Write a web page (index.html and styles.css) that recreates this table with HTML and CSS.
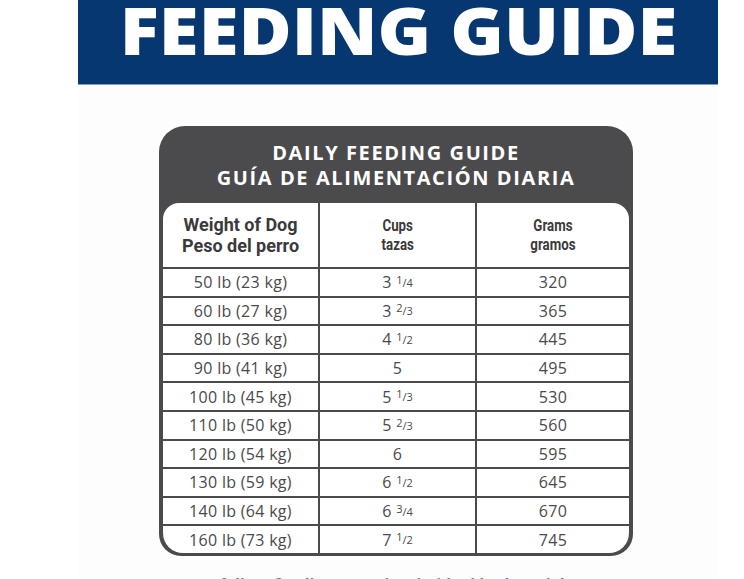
FILE: index.html
```html
<!DOCTYPE html>
<html lang="en">
<head>
<meta charset="utf-8">
<title>Feeding Guide</title>
<link rel="stylesheet" href="styles.css">
</head>
<body>
<div class="page">
  <header class="banner"><h1>FEEDING GUIDE</h1></header>
  <main class="content">
    <section class="card">
      <div class="card-title">
        <div>DAILY FEEDING GUIDE</div>
        <div>GUÍA DE ALIMENTACIÓN DIARIA</div>
      </div>
      <div class="table">
        <div class="cell th th-weight">Weight of Dog<br>Peso del perro</div>
        <div class="cell th th-small"><span class="cond">Cups<br>tazas</span></div>
        <div class="cell th th-small"><span class="cond">Grams<br>gramos</span></div>

        <div class="cell">50 lb (23 kg)</div><div class="cell">3&nbsp;<span class="frac"><span class="num">1</span>/<span class="den">4</span></span></div><div class="cell">320</div>
        <div class="cell">60 lb (27 kg)</div><div class="cell">3&nbsp;<span class="frac"><span class="num">2</span>/<span class="den">3</span></span></div><div class="cell">365</div>
        <div class="cell">80 lb (36 kg)</div><div class="cell">4&nbsp;<span class="frac"><span class="num">1</span>/<span class="den">2</span></span></div><div class="cell">445</div>
        <div class="cell">90 lb (41 kg)</div><div class="cell">5</div><div class="cell">495</div>
        <div class="cell">100 lb (45 kg)</div><div class="cell">5&nbsp;<span class="frac"><span class="num">1</span>/<span class="den">3</span></span></div><div class="cell">530</div>
        <div class="cell">110 lb (50 kg)</div><div class="cell">5&nbsp;<span class="frac"><span class="num">2</span>/<span class="den">3</span></span></div><div class="cell">560</div>
        <div class="cell">120 lb (54 kg)</div><div class="cell">6</div><div class="cell">595</div>
        <div class="cell">130 lb (59 kg)</div><div class="cell">6&nbsp;<span class="frac"><span class="num">1</span>/<span class="den">2</span></span></div><div class="cell">645</div>
        <div class="cell">140 lb (64 kg)</div><div class="cell">6&nbsp;<span class="frac"><span class="num">3</span>/<span class="den">4</span></span></div><div class="cell">670</div>
        <div class="cell">160 lb (73 kg)</div><div class="cell">7&nbsp;<span class="frac"><span class="num">1</span>/<span class="den">2</span></span></div><div class="cell">745</div>
      </div>
    </section>
    <p class="note">Adjust feeding to maintain ideal body weight</p>
  </main>
</div>
</body>
</html>
```

FILE: styles.css
```css
html, body {
  margin: 0;
  padding: 0;
  background: #ffffff;
}

.page {
  width: 640px;
  margin-left: 78px;
}

.banner {
  background: #073770;
  height: 84px;
  border-bottom: 1px solid #7f9dc6;
  display: flex;
  justify-content: center;
  align-items: flex-start;
  overflow: hidden;
}

.banner h1 {
  margin: 0;
  display: inline-block;
  font: 800 66px/58px "Open Sans", sans-serif;
  color: #ffffff;
  letter-spacing: 0;
  transform: scaleX(1.1);
}

.content {
  background: #fdfdfd;
  padding-top: 41px;
  height: 600px;
}

.card {
  width: 466px;
  margin-left: 81px;
  background: #4b4b4d;
  border-radius: 26px 26px 22px 22px;
  padding: 0 4px 3px;
}

.card-title {
  height: 77px;
  display: flex;
  flex-direction: column;
  align-items: center;
  justify-content: center;
  color: #ffffff;
  font: 700 20px/25px "Open Sans", sans-serif;
  letter-spacing: 1.6px;
}

.table {
  display: grid;
  grid-template-columns: 155px 155px 152px;
  grid-template-rows: 64px repeat(10, 26.6px);
  gap: 2px;
  background: #4b4b4d;
  border-radius: 16px 16px 20px 20px;
  overflow: hidden;
}

.cell {
  background: #ffffff;
  display: flex;
  align-items: center;
  justify-content: center;
  font: 400 16px/1 "Open Sans", sans-serif;
  color: #4a4a4a;
  letter-spacing: 0.3px;
}

.th {
  text-align: center;
  color: #3a3a3a;
  letter-spacing: 0;
}

.th-weight {
  font: 700 18px/21px Roboto, sans-serif;
}

.th-small {
  font: 700 17px/19px Roboto, sans-serif;
}

.cond {
  display: inline-block;
  transform: scaleX(0.78);
}

.frac {
  font-size: 11px;
  letter-spacing: 0;
}

.num {
  position: relative;
  top: -3px;
}

.note {
  margin: 18px 0 0;
  text-align: center;
  font: 700 16px/20px "Open Sans", sans-serif;
  color: #777777;
}
```
